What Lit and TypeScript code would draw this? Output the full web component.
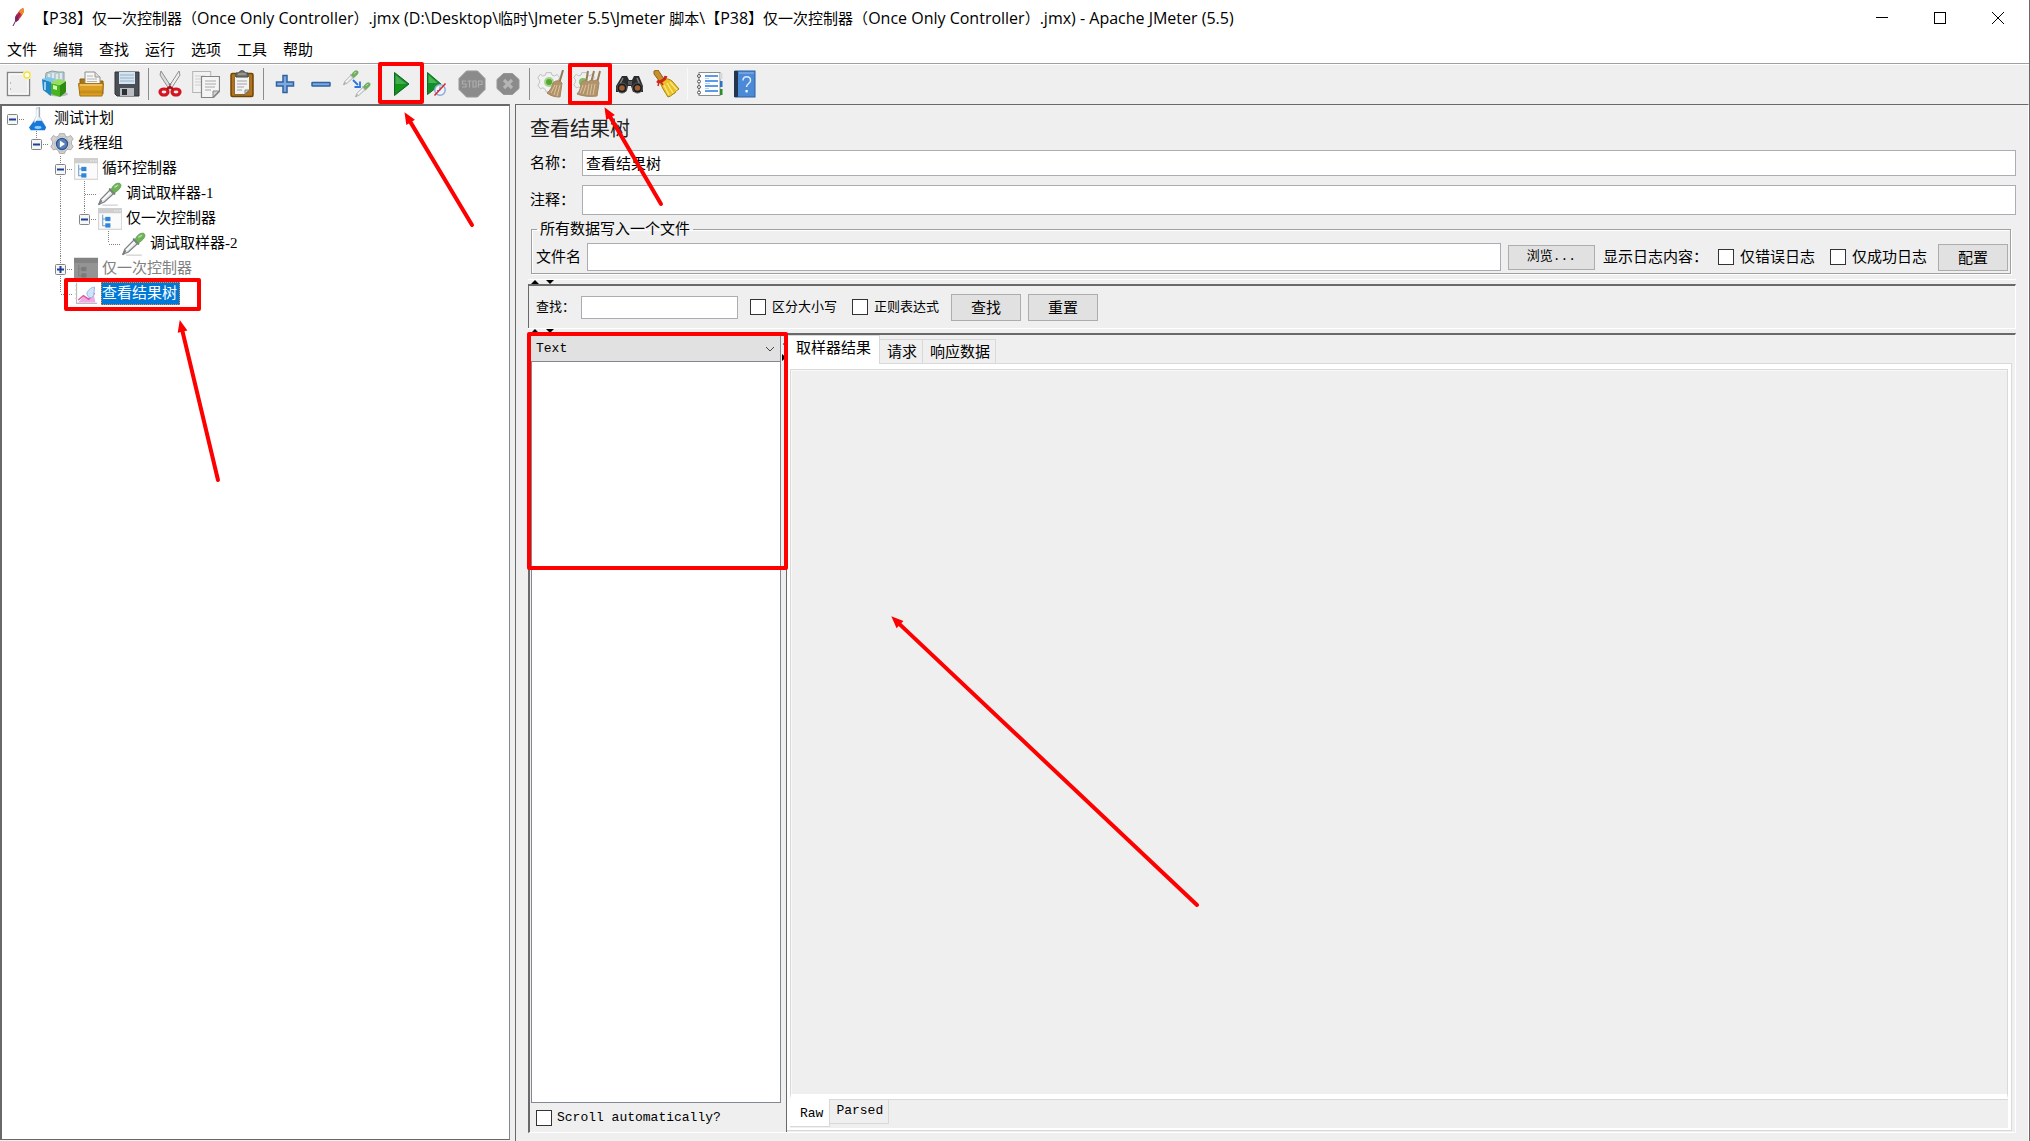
import { LitElement, html, svg, css, nothing, TemplateResult } from "lit";
import { customElement, state } from "lit/decorators.js";
import { classMap } from "lit/directives/class-map.js";

const icon = (body: TemplateResult, size = 28) =>
  html`<svg width=${size} height=${size} viewBox="0 0 28 28" aria-hidden="true">${body}</svg>`;

const pipette = (x: number, y: number, s: number, edge: string) => svg`
  <g transform="translate(${x} ${y}) scale(${s})">
    <path d="M1 24.500L3 19 13 9l4 4L7 22z" fill="#e2e5e5" stroke=${edge} stroke-width="1.300"/>
    <path d="M4 21L14 11" stroke="#fff" stroke-width="1.500"/>
    <path d="M1 25l3-5" stroke=${edge} stroke-width="2"/>
    <path d="M13 8l5 5" stroke=${edge} stroke-width="2.400" stroke-linecap="round"/>
    <path d="M14.500 8.500C16 4 20 .500 24 1.500c3 2.500 0 7-6 10.500z" fill="#6eb35c" stroke="#5a9a49" stroke-width="1"/>
    <path d="M18 6l4-2.500" stroke="#b8e0a6" stroke-width="1.600"/>
  </g>`;

const gearPath = "M11 2h6l1 3 3 1 3-2 3 4-2 3v3l2 3-3 4-3-1-3 2-1 3h-6l-1-3-3-2-3 1-3-4 2-3v-3l-2-3 3-4 3 2 3-1z";

const icons: Record<string, TemplateResult> = {
  create: svg`
    <rect x="2.5" y="2.5" width="22" height="23" fill="#f3f3f3" stroke="#858585" stroke-width="1.4"/>
    <rect x="4" y="4" width="19" height="20" fill="#eeeeee" stroke="#fff"/>
    <circle cx="22" cy="5" r="4.6" fill="#fbf6b4"/><circle cx="22" cy="5" r="3" fill="#fffef0" stroke="#f0df4a" stroke-width="1.3"/>
    <path d="M5.500 12v2M5.500 18v2" stroke="#bbb"/>`,
  templates: svg`
    <ellipse cx="17" cy="24" rx="10" ry="2.500" fill="#b9b9b9"/>
    <path d="M5 3l6-2 6 1 6 0v10H4z" fill="#b8cdd2" stroke="#8a9da2"/>
    <path d="M8 4v6M12 3v6M16 4v6M20 3v6" stroke="#eef5f7" stroke-width="1.400"/>
    <path d="M1 9l9 3v14l-8-6z" fill="#1f86c8"/><path d="M1 9l6-2 8 2-5 3z" fill="#7cc6ee"/>
    <path d="M4 12v8" stroke="#c8e8fa" stroke-width="1.500"/>
    <path d="M10 13l9 2v12l-9-3z" fill="#49b51d"/><path d="M19 15l6-4v11l-6 5z" fill="#2f8a10"/>
    <path d="M10 13l6-4 9 2-6 4z" fill="#94df5f"/><path d="M12 15l4 1v4l-4-1z" fill="#d4f5bd"/>`,
  open: svg`
    <path d="M3 9h6l2 2h15v13H3z" fill="#a87513" stroke="#8c610f"/>
    <path d="M8 14V2h10l5 5v7z" fill="#f7f7f7" stroke="#8e8e8e"/><path d="M18 2v5h5" fill="#ddd" stroke="#999"/>
    <path d="M10 6h6M10 9h10M10 11.500h10" stroke="#b3b3b3"/>
    <path d="M1.500 13.500h25L25 26H3z" fill="#dc9f25" stroke="#a6740f"/><path d="M3 15h22" stroke="#f4ca72" stroke-width="1.500"/>
    <path d="M3 22h22" stroke="#c98d18" stroke-width="3"/>`,
  save: svg`
    <path d="M2 2h24v24H4l-2-2z" fill="#4a4f55" stroke="#2f3338"/>
    <rect x="6" y="2" width="16" height="12" fill="#d6e4f0"/><path d="M7 5h14M7 8h14M7 11h14" stroke="#8fb1cc" stroke-width="1.200"/>
    <rect x="7" y="18" width="14" height="8" fill="#b9bdc1"/><rect x="9" y="19" width="5" height="6" fill="#2d3135"/>`,
  cut: svg`
    <path d="M5 1l11 17-3 1L4 5z" fill="#dcdfdc" stroke="#8c8f8c"/><path d="M23 1L12 18l3 1 9-14z" fill="#efefef" stroke="#8c8f8c"/>
    <circle cx="14" cy="14.500" r="1.200" fill="#777"/>
    <ellipse cx="8" cy="22" rx="4" ry="3" fill="none" stroke="#d4141f" stroke-width="3.200"/>
    <ellipse cx="20" cy="22" rx="4" ry="3" fill="none" stroke="#d4141f" stroke-width="3.200"/>
    <path d="M11 19l3-2 3 2" stroke="#b00d18" stroke-width="2.500" fill="none"/>`,
  copy: svg`
    <rect x=".7" y="1.500" width="18" height="21" fill="#f2f2f2" stroke="#b4b4b4"/>
    <path d="M3 6h10M3 9h6M3 12h6M3 15h6" stroke="#cfcfcf"/>
    <path d="M9.500 6.500h18v15l-6 6h-12z" fill="#f5f5f5" stroke="#848484" stroke-width="1.200"/>
    <path d="M27 21l-6 6v-6z" fill="#cfcfcf" stroke="#8a8a8a"/>
    <path d="M13 11h11M13 14h11M13 17h10M13 20h6" stroke="#a8a8a8"/>`,
  paste: svg`
    <rect x="3" y="3.500" width="22" height="23" rx="1.500" fill="#b1731b" stroke="#704507" stroke-width="1.500"/>
    <path d="M6.500 6.500h15v14l-4 4h-11z" fill="#f3f3f3" stroke="#8c6a33"/>
    <path d="M21 20h-4v4z" fill="#cdcdcd" stroke="#888"/><path d="M9 11h10M9 14h10M9 17h7M9 20h5" stroke="#a5a5a5"/>
    <path d="M8 3h3c0-3 6-3 6 0h3v4H8z" fill="#73756f" stroke="#484a46"/><path d="M10 4h8" stroke="#b9bab6"/>`,
  plus: svg`<path d="M12 5.500h4v6.500h6.500v4H16v6.500h-4V16H5.500v-4H12z" fill="#7fa9dc" stroke="#2f61a3" stroke-width="1.500"/>`,
  minus: svg`<rect x="5" y="12.500" width="18" height="3.500" rx=".5" fill="#7fa9dc" stroke="#2f61a3" stroke-width="1.500"/>`,
  toggle: svg`
    ${pipette(0, 0, 0.6, "#a9adad")}${pipette(12, 12, 0.6, "#a9adad")}
    <path d="M10 10l5 5M17 11.500V17h-5.500" stroke="#2c74e0" stroke-width="1.800" fill="none"/>`,
  start: svg`
    <path d="M8.500 2.500L23 14 8.500 25.500z" fill="#14852d" stroke="#0b6a1f"/><path d="M9.500 5L20.500 14H9.500z" fill="#43ad4d"/>
    <path d="M9.500 14.500h11L9.500 23z" fill="#109a12"/>`,
  startNow: svg`
    <path d="M5.500 2.500L19 14 5.500 24.500z" fill="#128f2a" stroke="#0e6e20"/><path d="M6.500 5l9 8h-9z" fill="#4ab356"/>
    <circle cx="18" cy="20" r="5.200" fill="#eef4fb" stroke="#8aaed8" stroke-width="1.500"/>
    <path d="M18 16.500v4h-3" stroke="#5c8ac2" fill="none"/><path d="M12.500 25.500l11-12" stroke="#da2e35" stroke-width="1.600"/>`,
  stop: svg`
    <path d="M8.500 1h11L27 8.500v11L19.500 27h-11L1 19.500v-11z" fill="#8b8b8b" stroke="#979797"/>
    <g fill="none" stroke="#adadad" stroke-width="1.200"><path d="M8 11H4.500v3H8v3H4M9.500 11h4M11.500 11v6.500M15 11h3v6h-3zM20.500 17.500V11H24v3.500h-3.500"/></g>`,
  shutdown: svg`
    <path d="M9.500 3.500h9L25 9.500v9l-6.500 6h-9l-6.500-6v-9z" fill="#8b8b8b" stroke="#979797"/>
    <path d="M10 10l8 8M18 10l-8 8" stroke="#b5b5b5" stroke-width="3.200"/>`,
  clear: svg`
    <path d=${gearPath} transform="translate(0 1) scale(.84)" fill="#f2f2f2" stroke="#b5b5b5"/>
    <circle cx="12" cy="12" r="5" fill="#a7d392"/><circle cx="12" cy="12" r="3" fill="#58a82d"/>
    <path d="M26 0l-4 14" stroke="#8d7857" stroke-width="2"/>
    <path d="M16 13c3-3 6-3 9 0l-2 14c-5 0-9-1-13-4 3-2 5-6 6-10z" fill="#b39368" stroke="#a38762"/>
    <path d="M18 15l-4 8M20 15l-3 10M23 15l-3 11" stroke="#dcc6a0"/>`,
  clearAll: svg`
    <path d=${gearPath} transform="translate(0 1) scale(.8)" fill="#eee" stroke="#b5b5b5"/>
    <circle cx="10" cy="12" r="4" fill="#83bd62"/>
    <path d="M15 1l-2 12M21 1l-3 12M27 1l-3 12" stroke="#9a7d56" stroke-width="2"/>
    <path d="M8 13c3-3 5-3 7-1 2-2 4-2 6-1 3-2 4-1 5 2l-2 13c-8 1-15 0-20-2 3-3 4-7 4-11z" fill="#b2936b" stroke="#a38762"/>
    <path d="M10 15l-3 8M13 15l-3 9M16 14l-2 11M19 14l-2 11M22 14l-2 11" stroke="#dac5a2"/>`,
  search: svg`
    <path d="M6 6h5l2 4h3l2-4h5l4 10v6h-10l-2-6-3 0-2 6H0v-6z" fill="#292b2d"/>
    <path d="M7 8l-4 8M21 8l3 7" stroke="#7d8184" stroke-width="1.500"/>
    <circle cx="6" cy="18" r="5" fill="#1b1b1b" stroke="#595959"/><circle cx="6" cy="18" r="2.800" fill="#9c5e34"/>
    <circle cx="21.500" cy="18" r="5" fill="#1b1b1b" stroke="#595959"/><circle cx="21.500" cy="18" r="2.800" fill="#9c5e34"/>
    <path d="M12 11h4v4h-4z" fill="#555"/>`,
  reset: svg`
    <path d="M2 1l4-1 6 9-4 3-6-8z" fill="#c98f28" stroke="#8c601a"/>
    <path d="M8 12c4-4 8-4 12-1l7 8c-2 2-3 1-4 4-3 1-3 3-7 4-3-5-6-9-8-15z" fill="#ecc326" stroke="#a98208"/>
    <path d="M12 15l5 10M15 13l6 10M18 12l7 8" stroke="#fbe98c" stroke-width="1.200"/>
    <path d="M5 11c3 2 8-1 9-5" stroke="#cf2419" stroke-width="3" fill="none"/><path d="M7 12l-1 4M9 12l2 3" stroke="#cf2419" stroke-width="1.500"/>`,
  functions: svg`
    <rect x="4" y="2.500" width="21" height="23" fill="#fdfdfd" stroke="#8e8e8e"/>
    <path d="M10 6h13M10 11h13M10 16h13M10 21h13" stroke="#2a7be0" stroke-width="1.600"/>
    <path d="M10 8.500h4M10 13.500h5M10 18.500h4" stroke="#b8d2f2"/>
    <path d="M25 3h2.500v6H25z" fill="#d8d8d8"/><path d="M25 11h2.500v6H25z" fill="#2d71c9"/><path d="M25 19h2.500v6H25z" fill="#2c8d2a"/>
    <g fill="#fff" stroke="#565656"><circle cx="4" cy="6" r="1.500"/><circle cx="4" cy="11.500" r="1.500"/><circle cx="4" cy="17" r="1.500"/><circle cx="4" cy="22.500" r="1.500"/></g>`,
  help: svg`
    <rect x="4" y="1" width="20" height="26" fill="#4a8ad6" stroke="#2c5f9f"/><rect x="3" y="1" width="4" height="26" fill="#22364f"/>
    <path d="M8 3h15" stroke="#8fbaf0"/><path d="M12 10.500c0-5 7.500-5 7.500 0 0 3-4 3-4 6.500" fill="none" stroke="#dfebfa" stroke-width="1.500"/>
    <rect x="14.500" y="20" width="2.200" height="2.400" fill="#fff"/>`,
  plan: svg`
    <path d="M12 1h4v10l7 12-2 3H7l-2-3 7-12z" fill="#e4edf4" stroke="#c3ced7"/>
    <path d="M9.500 16h9l5 8-1.500 3H5.500l-2-3z" fill="#1777d8"/><ellipse cx="14" cy="24" rx="4" ry="1.700" fill="#8fd0fb"/>
    <path d="M13 3v9l-3 6" stroke="#fff" stroke-width="1.300" fill="none"/><path d="M15.500 0v12" stroke="#8b969f"/>`,
  threads: svg`
    <path d=${gearPath} fill="#d3d3d3" stroke="#a3a3a3"/><circle cx="14" cy="14" r="8.500" fill="#e8e8e8" stroke="#b5b5b5"/>
    <circle cx="14" cy="14" r="6.500" fill="#5a80ba" stroke="#31528a" stroke-width="1.500"/><path d="M11.500 10l6 4-6 4z" fill="#fff"/>`,
  controller: svg`
    <rect x=".7" y="2" width="27" height="24" fill="#fbfbfb" stroke="#d4d4d4" stroke-width="1.400"/><rect x="0" y="1.300" width="28" height="6" fill="#cecece"/>
    <path d="M19 4.500h1.500M22 4.500h1.500M25 4.500h1.500" stroke="#fff"/>
    <path d="M5.500 9v13H10M5.500 14H10" stroke="#6f9ac6" fill="none" stroke-width="1.200"/>
    <rect x="8.500" y="11.500" width="6" height="5" fill="#2f85dc"/><rect x="8.500" y="19" width="6" height="5" fill="#2f85dc"/>`,
  disabled: svg`
    <rect x="0" y="1" width="28" height="25" fill="#949494"/><rect x="0" y="1" width="28" height="6" fill="#838383"/>
    <path d="M5.500 9v13H10M5.500 14H10" stroke="#7d7d7d" fill="none"/><rect x="8.500" y="11.500" width="6" height="5" fill="#7b7b7b"/><rect x="8.500" y="19" width="6" height="5" fill="#7b7b7b"/>`,
  sampler: svg`<path d="M5 27h18" stroke="#d0d0d0" stroke-width="1.500"/>${pipette(0, 0, 1.06, "#7c8080")}`,
  listener: svg`
    <path d="M3 1v24h24" stroke="#bcbcbc" fill="none" stroke-width="1.300"/><path d="M1 4h2M1 9h2M1 14h2M1 19h2" stroke="#c9c9c9"/>
    <path d="M5 24l6-7 6 3 6-6 2 10z" fill="#f1a9e6"/><path d="M5 21l6-5 6 4 7-7" stroke="#da5a9d" stroke-width="1.800" fill="none"/>
    <path d="M15 13c2-5 6-7 9-7l-1 10c-3 4-7 3-8-3z" fill="#cfe3fb" stroke="#88aee8"/>`,
};

type Guide = "" | "v" | "tee" | "end" | "root" | "last" | "mid" | "plus";

interface Row {
  label: string;
  icon: string;
  guides: Guide[];
  disabled?: boolean;
  selected?: boolean;
}

const rows: Row[] = [
  { label: "测试计划", icon: "plan", guides: ["root"] },
  { label: "线程组", icon: "threads", guides: ["", "last"] },
  { label: "循环控制器", icon: "controller", guides: ["", "", "mid"] },
  { label: "调试取样器-1", icon: "sampler", guides: ["", "", "v", "tee"] },
  { label: "仅一次控制器", icon: "controller", guides: ["", "", "v", "last"] },
  { label: "调试取样器-2", icon: "sampler", guides: ["", "", "v", "", "end"] },
  { label: "仅一次控制器", icon: "disabled", guides: ["", "", "plus"], disabled: true },
  { label: "查看结果树", icon: "listener", guides: ["", "", "end"], selected: true },
];

const tools: string[][] = [
  ["create", "templates", "open", "save"],
  ["cut", "copy", "paste"],
  ["plus", "minus", "toggle"],
  ["start", "startNow", "stop", "shutdown"],
  ["clear", "clearAll"],
  ["search", "reset"],
  ["functions", "help"],
];

const menus = ["文件", "编辑", "查找", "运行", "选项", "工具", "帮助"];

const planName = "【P38】仅一次控制器（Once Only Controller）.jmx";
const windowTitle = `${planName} (D:\\Desktop\\临时\\Jmeter 5.5\\Jmeter 脚本\\${planName}) - Apache JMeter (5.5)`;

/** Splits a title into runs of Latin and of Chinese text, which take different sizes. */
const runs = (text: string) => text.match(/[\x20-\x7e]+|[^\x20-\x7e]+/g) ?? [];

@customElement("plan-tree")
class PlanTree extends LitElement {
  static styles = css`
    :host { display: block; }
    .row { display: flex; align-items: center; height: 25px; }
    .cell { width: 24px; height: 25px; flex: none; }
    .cell svg { display: block; }
    .icon { width: 24px; height: 24px; flex: none; margin-right: 3px; }
    .label { padding: 0 1px; height: 23px; line-height: 23px; white-space: nowrap; }
    .disabled .label { color: #808080; }
    .selected .label { background: #0078d7; color: #fff; outline: 1px dotted #ff8728; outline-offset: -1px; padding-right: 3px; }
  `;

  private guide(kind: Guide) {
    const dash = "1 1";
    const up = ["v", "tee", "end", "last", "mid", "plus"].includes(kind);
    const down = ["v", "tee", "mid", "plus"].includes(kind);
    const side = kind !== "" && kind !== "v";
    const box = ["root", "last", "mid", "plus"].includes(kind);
    return html`<svg width="24" height="25" viewBox="0 0 24 25" aria-hidden="true">
      <g stroke="#808080" stroke-dasharray=${dash}>
        ${up ? svg`<path d="M10.500 0v12"/>` : nothing}
        ${down ? svg`<path d="M10.500 12v13"/>` : nothing}
        ${side ? svg`<path d="M11 13.500h12"/>` : nothing}
      </g>
      ${box
        ? svg`<rect x="5.500" y="8.500" width="10" height="10" rx="1" fill="#f6f6f6" stroke="#848484"/><path d="M7 13.500h7" stroke="#1c3f95" stroke-width="2"/>`
        : nothing}
      ${kind === "plus" ? svg`<path d="M10.500 10v7" stroke="#1c3f95" stroke-width="2"/>` : nothing}
    </svg>`;
  }

  render() {
    return html`<div role="tree">
      ${rows.map(
        (r) => html`<div role="treeitem" class=${classMap({ row: true, disabled: !!r.disabled, selected: !!r.selected })}>
          ${r.guides.map((g) => html`<span class="cell">${this.guide(g)}</span>`)}
          <span class="icon">${icon(icons[r.icon], 24)}</span>
          <span class="label">${r.label}</span>
        </div>`
      )}
    </div>`;
  }
}

@customElement("app-root")
class AppRoot extends LitElement {
  @state() private tab = 0;
  @state() private view = 0;

  static styles = css`
    * { box-sizing: border-box; }
    :host {
      display: flex; flex-direction: column; position: relative; height: 100vh; overflow: hidden;
      box-sizing: border-box; border-right: 1px solid #696969; background: #efefef; color: #000;
      font: 15px/20px "Liberation Serif", "Noto Sans CJK SC", sans-serif;
    }
    button, input, select { font: inherit; color: inherit; margin: 0; border-radius: 0; }
    button { padding: 0; border: 0; background: none; }
    input[type="text"] { border: 1px solid #abadb3; background: #fff; padding: 0 3px 2px; outline: none; min-width: 0; }
    input[type="checkbox"] { appearance: none; width: 16px; height: 16px; flex: none; border: 1px solid #333; background: #fff; }
    .title { display: flex; align-items: center; height: 35px; flex: none; background: #fff; padding: 0 8px; font-family: "Open Sans", "Noto Sans CJK SC", sans-serif; }
    .title h1 { font: inherit; font-size: 15px; margin: 0 auto 0 6px; white-space: nowrap; }
    .title .latin { font-size: 16px; }
    .title button { width: 46px; margin-left: 12px; height: 30px; display: grid; place-items: center; }
    .menu { display: flex; gap: 16px; height: 28px; flex: none; background: #fff; padding: 0 7px 1px; align-items: center; font-family: "Noto Sans CJK SC", sans-serif; }
    .tools { display: flex; height: 41px; flex: none; align-items: center; padding-left: 1px; border-top: 1px solid #a0a0a0; box-shadow: inset 0 1px #fff; }
    .tools button { width: 36px; height: 32px; display: grid; place-items: center; }
    .group { display: flex; align-items: center; }
    .group + .group::before { content: ""; width: 1px; height: 32px; background: #8c8c8c; margin: 0 3px; }
    .group:last-child::before { background: #fafafa; }
    .main { display: flex; flex: 1; min-height: 0; }
    .side { width: 510px; flex: none; margin-bottom: 1px; background: #fff; border: solid #696969; border-width: 2px 1px 1px 2px; border-right-color: #828790; }
    .panel { flex: 1; min-width: 0; margin-left: 5px; border-left: 1px solid #696969; border-top: 1px solid #696969; border-right: 1px solid #fff; padding: 11px 12px 8px; display: flex; flex-direction: column; }
    h2 { font: inherit; font-size: 20px; line-height: 27px; margin: 0 0 7px 2px; color: #222; }
    .field { display: grid; grid-template-columns: 54px 1fr; align-items: center; }
    .field label { padding-left: 2px; }
    .name input { height: 26px; }
    .note { margin-top: 9px; }
    .note input { height: 30px; }
    fieldset { margin: 4px 5px 5px 3px; padding: 4px 2px 2px 4px; border: 1px solid #a0a0a0; box-shadow: 1px 1px #fff, inset 1px 1px #fff; min-width: 0; }
    legend { padding: 0 3px; margin-left: 1px; height: 20px; }
    .file { display: flex; align-items: center; }
    .file input[type="text"] { flex: 1; height: 28px; margin: 0 7px 0 6px; }
    .push { background: #e1e1e1; border: 1px solid #adadad; width: 70px; height: 27px; line-height: 24px; flex: none; font-family: "Noto Sans CJK SC", sans-serif; }
    .push.browse { width: 87px; height: 25px; font: 13px/20px "Liberation Mono", "Noto Sans CJK SC", monospace; margin-right: 8px; }
    .caption { margin-right: 10px; }
    .check { display: flex; align-items: center; gap: 6px; white-space: nowrap; }
    .file .check { margin-right: 15px; }
    .file .check + .push { margin-left: -4px; }
    .split { height: 5px; flex: none; border-top: 1px solid #fff; padding-left: 3px; display: flex; gap: 7px; }
    .split svg { display: block; }
    .find { display: flex; align-items: center; height: 44px; flex: none; border-top: 2px solid #696969; border-left: 1px solid #696969; border-right: 1px solid #fff; padding-left: 7px; font-size: 13px; }
    .find .find-label { width: 45px; }
    .find input[type="text"] { width: 157px; height: 23px; margin-right: 12px; }
    .find .check { margin-right: 15px; }
    .find .push { font-size: 15px; margin-right: 7px; }
    .find .check + .push { margin-left: -3px; }
    .results { flex: 1; min-height: 0; display: flex; border: solid #696969; border-width: 2px 1px 1px 2px; border-right-color: #fff; border-bottom-color: #fff; }
    .mono { font-family: "Liberation Mono", "Noto Sans CJK SC", monospace; font-size: 13px; }
    .list { width: 251px; flex: none; display: flex; flex-direction: column; padding: 1px 0 0 1px; }
    .pick { position: relative; display: flex; }
    .pick select { appearance: none; width: 100%; height: 25px; background: #e1e1e1; border: 0; border-right: 1px solid #828790; padding: 0 5px; }
    .pick svg { position: absolute; right: 6px; top: 10px; }
    .items { flex: 1; background: #fff; border: 1px solid #828790; }
    .list .check { height: 29px; padding-left: 5px; gap: 5px; }
    .bar { width: 6px; flex: none; border-right: 1px solid #696969; }
    .bar svg { display: block; margin: 6px 0 0 1px; }
    .viewer { flex: 1; min-width: 0; display: flex; flex-direction: column; padding-right: 3px; }
    .tabs { display: flex; align-items: flex-end; height: 28px; flex: none; }
    .tabs button { border: 1px solid #d9d9d9; border-bottom: 0; border-left: 0; height: 24px; padding: 0 5px 0 7px; line-height: 22px; }
    .tabs button.on { background: #fff; height: 29px; margin-bottom: -1px; padding: 0 8px 4px 9px; line-height: 22px; position: relative; }
    .frame { flex: 1; min-height: 0; display: flex; flex-direction: column; background: #fff; border: 1px solid #d9d9d9; border-left: 0; padding: 5px 3px 2px; margin-bottom: 1px; }
    .body { flex: 1; background: #efefef; border: 1px solid #d9d9d9; border-bottom: 5px solid #fff; box-shadow: inset 1px 1px #f8f8f8; }
    .views { display: flex; align-items: flex-start; height: 29px; flex: none; background: #efefef; border-top: 1px solid #d9d9d9; }
    .views button { border: 1px solid #d9d9d9; border-top: 0; border-left: 0; height: 24px; padding: 0 5px 2px 6px; }
    .views button.on { background: #fff; height: 28px; margin-top: -1px; padding: 2px 6px 0 10px; position: relative; }
    .marks { position: absolute; left: 0; top: 0; width: 100%; height: 100%; pointer-events: none; }
  `;

  private splitter() {
    return html`<div class="split">
      <svg width="8" height="4" viewBox="0 0 8 4"><path d="M0 4L4 0l4 4z"/></svg>
      <svg width="8" height="4" viewBox="0 0 8 4"><path d="M0 0h8L4 4z"/></svg>
    </div>`;
  }

  private marks() {
    const arrows = [
      [405, 113, 472, 225],
      [605, 108, 661, 204],
      [180, 321, 218, 480],
      [892, 617, 1197, 905],
    ];
    const boxes = [
      [380, 64, 42, 38],
      [570, 65, 40, 38],
      [66, 280, 133, 29],
      [529, 334, 257, 234],
    ];
    return html`<svg class="marks" aria-hidden="true">
      <g fill="none" stroke="#fe0000" stroke-width="4" stroke-linejoin="round">
        ${boxes.map(([x, y, w, h]) => svg`<rect x=${x} y=${y} width=${w} height=${h}/>`)}
      </g>
      ${arrows.map(([x1, y1, x2, y2]) => {
        const len = Math.hypot(x2 - x1, y2 - y1);
        const angle = (Math.atan2(y2 - y1, x2 - x1) * 180) / Math.PI;
        return svg`<g transform="translate(${x1} ${y1}) rotate(${angle})">
          <path d="M6 0H${len}" stroke="#fe0000" stroke-width="4" stroke-linecap="round"/>
          <path d="M-1 0L11 -5V5z" fill="#fe0000"/></g>`;
      })}
    </svg>`;
  }

  render() {
    return html`
      <header class="title">
        <svg width="20" height="22" viewBox="0 0 20 22" aria-hidden="true">
          <path d="M15 1c2 3-1 9-7 14C6 12 9 4 15 1z" fill="#d22c3c"/><path d="M15 1c2 2 1 5-1 7l-3-3c1-2 2-3 4-4z" fill="#ef8b28"/>
          <path d="M8 15C6 12 7 9 9 7l2 6z" fill="#8f2465"/><path d="M12 6L7 15l-2 4" stroke="#5b2460" fill="none"/>
        </svg>
        <h1>${runs(windowTitle).map((t) => html`<span class=${/^[\x20-\x7e]/.test(t) ? "latin" : "han"}>${t}</span>`)}</h1>
        <button aria-label="最小化"><svg width="12" height="12"><path d="M0 5.500h12" stroke="#000"/></svg></button>
        <button aria-label="最大化"><svg width="12" height="12"><rect x=".5" y=".5" width="11" height="11" fill="none" stroke="#000"/></svg></button>
        <button aria-label="关闭"><svg width="12" height="12"><path d="M0 0l12 12M12 0L0 12" stroke="#000"/></svg></button>
      </header>
      <nav class="menu">${menus.map((m) => html`<button>${m}</button>`)}</nav>
      <div class="tools">
        ${tools.map((g) => html`<div class="group">${g.map((t) => html`<button aria-label=${t}>${icon(icons[t])}</button>`)}</div>`)}
      </div>
      <div class="main">
        <aside class="side"><plan-tree></plan-tree></aside>
        <main class="panel">
          <h2>查看结果树</h2>
          <div class="field name"><label for="name">名称：</label><input id="name" type="text" .value=${"查看结果树"} /></div>
          <div class="field note"><label for="note">注释：</label><input id="note" type="text" /></div>
          <fieldset>
            <legend>所有数据写入一个文件</legend>
            <div class="file">
              <label for="file">文件名</label><input id="file" type="text" />
              <button class="push browse">浏览...</button>
              <span class="caption">显示日志内容：</span>
              <label class="check"><input type="checkbox" />仅错误日志</label>
              <label class="check"><input type="checkbox" />仅成功日志</label>
              <button class="push">配置</button>
            </div>
          </fieldset>
          ${this.splitter()}
          <div class="find">
            <label class="find-label" for="find">查找：</label><input id="find" type="text" />
            <label class="check"><input type="checkbox" />区分大小写</label>
            <label class="check"><input type="checkbox" />正则表达式</label>
            <button class="push">查找</button>
            <button class="push">重置</button>
          </div>
          ${this.splitter()}
          <section class="results">
            <div class="list mono">
              <div class="pick">
                <select aria-label="Renderer"><option>Text</option></select>
                <svg width="10" height="7" viewBox="0 0 10 7"><path d="M1 1l4 4 4-4" fill="none" stroke="#444"/></svg>
              </div>
              <div class="items"></div>
              <label class="check"><input type="checkbox" />Scroll automatically?</label>
            </div>
            <div class="bar"><svg width="4" height="20" viewBox="0 0 4 20"><path d="M4 0v6L1 3zM0 13v7l4-3.500z"/></svg></div>
            <div class="viewer">
              <div class="tabs" role="tablist">
                ${["取样器结果", "请求", "响应数据"].map(
                  (t, i) => html`<button role="tab" class=${classMap({ on: this.tab === i })} @click=${() => (this.tab = i)}>${t}</button>`
                )}
              </div>
              <div class="frame">
                <div class="body"></div>
                <div class="views mono" role="tablist">
                  ${["Raw", "Parsed"].map(
                    (t, i) => html`<button role="tab" class=${classMap({ on: this.view === i })} @click=${() => (this.view = i)}>${t}</button>`
                  )}
                </div>
              </div>
            </div>
          </section>
        </main>
      </div>
      ${this.marks()}
    `;
  }
}
